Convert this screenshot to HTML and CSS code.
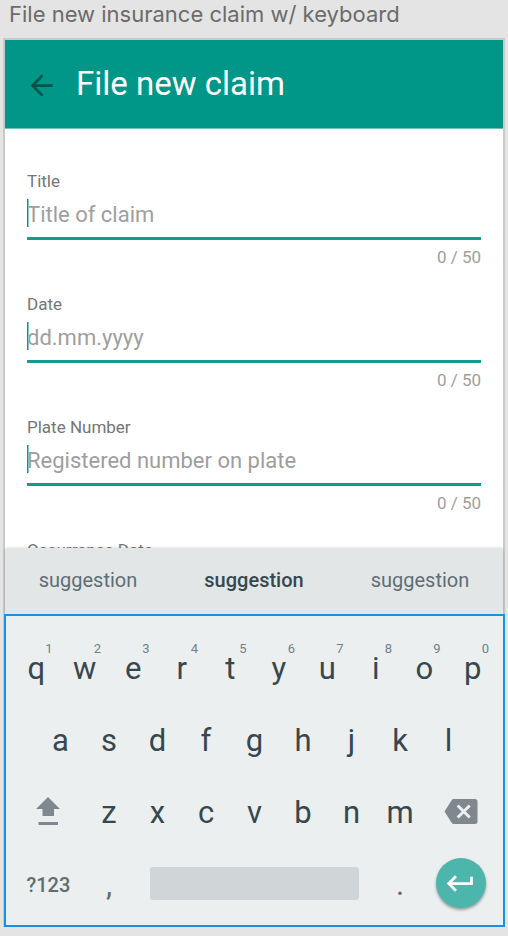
FILE: index.html
```html
<!DOCTYPE html>
<html lang="en">
<head>
<meta charset="utf-8">
<meta name="viewport" content="width=device-width, initial-scale=1">
<title>File new claim</title>
<link rel="stylesheet" href="styles.css">
</head>
<body>
<h2 class="caption">File new insurance claim w/ keyboard</h2>
<main class="phone">
  <header class="app-bar">
    <button class="back" type="button" aria-label="Back">
      <svg viewBox="0 0 24 24" width="33" height="33"><path d="M20 11H7.83l5.59-5.59L12 4l-8 8 8 8 1.41-1.41L7.83 13H20v-2z"/></svg>
    </button>
    <h1 class="title">File new claim</h1>
  </header>

  <form class="form">
    <div class="field">
      <label class="label" for="title">Title</label>
      <div class="control"><input class="input" id="title" type="text" placeholder="Title of claim"></div>
      <span class="counter">0 / 50</span>
    </div>
    <div class="field">
      <label class="label" for="date">Date</label>
      <div class="control"><input class="input" id="date" type="text" placeholder="dd.mm.yyyy"></div>
      <span class="counter">0 / 50</span>
    </div>
    <div class="field">
      <label class="label" for="plate">Plate Number</label>
      <div class="control"><input class="input" id="plate" type="text" placeholder="Registered number on plate"></div>
      <span class="counter">0 / 50</span>
    </div>
    <div class="field">
      <label class="label" for="occurrence">Occurrence Date</label>
      <div class="control"><input class="input" id="occurrence" type="text"></div>
    </div>
  </form>

  <div class="suggestions">
    <button class="suggestion" type="button">suggestion</button>
    <button class="suggestion best" type="button">suggestion</button>
    <button class="suggestion" type="button">suggestion</button>
  </div>

  <section class="keyboard" aria-label="Keyboard">
    <div class="row">
      <button class="key" type="button">q<span class="alt">1</span></button>
      <button class="key" type="button">w<span class="alt">2</span></button>
      <button class="key" type="button">e<span class="alt">3</span></button>
      <button class="key" type="button">r<span class="alt">4</span></button>
      <button class="key" type="button">t<span class="alt">5</span></button>
      <button class="key" type="button">y<span class="alt">6</span></button>
      <button class="key" type="button">u<span class="alt">7</span></button>
      <button class="key" type="button">i<span class="alt">8</span></button>
      <button class="key" type="button">o<span class="alt">9</span></button>
      <button class="key" type="button">p<span class="alt">0</span></button>
    </div>
    <div class="row">
      <button class="key indent" type="button">a</button>
      <button class="key" type="button">s</button>
      <button class="key" type="button">d</button>
      <button class="key" type="button">f</button>
      <button class="key" type="button">g</button>
      <button class="key" type="button">h</button>
      <button class="key" type="button">j</button>
      <button class="key" type="button">k</button>
      <button class="key" type="button">l</button>
    </div>
    <div class="row">
      <button class="key wide graphic" type="button" aria-label="Shift">
        <svg class="glyph" viewBox="0 0 24 28" width="24" height="28"><path d="M12 0L24 12H18V19H6.500V12H0zM2.500 25H22V28H2.500z"/></svg>
      </button>
      <button class="key" type="button">z</button>
      <button class="key" type="button">x</button>
      <button class="key" type="button">c</button>
      <button class="key" type="button">v</button>
      <button class="key" type="button">b</button>
      <button class="key" type="button">n</button>
      <button class="key" type="button">m</button>
      <button class="key wide graphic" type="button" aria-label="Delete">
        <svg class="glyph" viewBox="0 0 34 25" width="34" height="25"><path d="M9.500 0H31a2.500 2.500 0 0 1 2.500 2.500v20A2.500 2.500 0 0 1 31 25H9.500Q8.500 25 7.800 24L.5 12.500 7.800 1Q8.500 0 9.500 0z"/><path class="cross" d="M13.700 6.500l12 12M25.700 6.500l-12 12"/></svg>
      </button>
    </div>
    <div class="row">
      <button class="key wide symbols" type="button">?123</button>
      <button class="key soft" type="button">,</button>
      <button class="key space graphic" type="button" aria-label="Space"><span class="bar"></span></button>
      <button class="key soft" type="button">.</button>
      <button class="key wide graphic" type="button" aria-label="Enter">
        <span class="enter"><svg viewBox="0 0 24 24" width="33" height="33"><path d="M19 7v4H5.830l3.580-3.590L8 6l-6 6 6 6 1.410-1.410L5.830 13H21V7z"/></svg></span>
      </button>
    </div>
  </section>
</main>
</body>
</html>
```
FILE: styles.css
```css
* {
  box-sizing: border-box;
}

body {
  display: flex;
  flex-direction: column;
  height: 100vh;
  margin: 0;
  padding: 0 3px 9px;
  background: #e4e4e4;
  font-family: Roboto, "Liberation Sans", sans-serif;
}

button {
  padding: 0;
  border: 0;
  background: none;
  color: inherit;
  font: inherit;
}

svg {
  display: block;
}

.caption {
  flex: none;
  margin: 0;
  padding: 0 6px 10px;
  color: #6b6b6b;
  font-family: Inter, sans-serif;
  font-size: 22px;
  font-weight: 400;
  line-height: 28px;
}

.phone {
  display: flex;
  flex: 1;
  flex-direction: column;
  min-height: 0;
  border: 2px solid #c9c9c9;
  border-bottom: 0;
  background: #fff;
}

.app-bar {
  display: flex;
  flex: none;
  align-items: center;
  gap: 18px;
  height: 89px;
  padding: 0 20px;
  border-bottom: 1px solid #6fc0b8;
  background: #009788;
}

.back {
  padding-top: 3px;
  fill: #03554c;
}

.title {
  margin: 0;
  color: #fff;
  font-size: 33px;
  font-weight: 400;
  line-height: 40px;
}

.form {
  display: flex;
  flex: 1;
  flex-direction: column;
  gap: 27px;
  min-height: 0;
  padding: 42px 22px 0;
  overflow: hidden;
}

.field {
  display: flex;
  flex: none;
  flex-direction: column;
}

.label {
  margin-bottom: 8px;
  color: #757575;
  font-size: 17px;
  line-height: 20px;
}

.control {
  position: relative;
  padding-bottom: 9px;
  border-bottom: 3px solid #109c8f;
}

.control::before {
  content: "";
  position: absolute;
  top: 0;
  left: 0;
  width: 1px;
  height: 28px;
  border-right: 1px solid #80cbc4;
  background: #009688;
}

.input {
  display: block;
  width: 100%;
  height: 29px;
  padding: 1px 0 0;
  border: 0;
  outline: 0;
  background: none;
  color: #212121;
  font: 22px/28px Roboto, "Liberation Sans", sans-serif;
}

.input::placeholder {
  color: #9e9e9e;
  opacity: 1;
}

.counter {
  align-self: flex-end;
  margin-top: 7px;
  color: #9e9e9e;
  font-size: 17px;
  line-height: 20px;
}

.suggestions {
  display: grid;
  flex: none;
  grid-template-columns: repeat(3, 1fr);
  height: 66px;
  border-radius: 3px 3px 0 0;
  background: #e2e6e7;
  box-shadow: 0 0 3px rgba(0, 0, 0, 0.2);
}

.suggestion {
  padding-bottom: 2px;
  color: #5f6d74;
  font-size: 20px;
}

.best {
  color: #37474f;
  font-weight: 500;
}

.keyboard {
  position: relative;
  flex: none;
  margin: 0 -2px 0 -1px;
  padding: 17px 6px 4px;
  border: 2px solid #1a8fe3;
  background: #ebeff0;
}

.row {
  display: grid;
  grid-template-columns: repeat(20, 1fr);
  height: 72px;
}

.key {
  display: flex;
  position: relative;
  grid-column-end: span 2;
  align-items: center;
  justify-content: center;
  color: #37474f;
  font-size: 31px;
  line-height: 36px;
}

.indent {
  grid-column-start: 2;
}

.wide {
  grid-column-end: span 3;
}

.graphic {
  padding-bottom: 4px;
}

.space {
  grid-column-end: span 10;
  padding-right: 17px;
  padding-left: 17px;
}

.alt {
  position: absolute;
  top: 8px;
  right: 8px;
  color: #70808a;
  font-size: 13px;
  line-height: 16px;
}

.symbols {
  color: #5f6d74;
  font-size: 20px;
  font-weight: 500;
}

.soft {
  color: #5f6d74;
}

.glyph {
  fill: #80888f;
}

.cross {
  stroke: #ebeff0;
  stroke-width: 3;
}

.bar {
  flex: 1;
  height: 33px;
  border-radius: 3px;
  background: #d0d5d8;
}

.enter {
  display: flex;
  align-items: center;
  justify-content: center;
  width: 50px;
  height: 50px;
  border-radius: 50%;
  background: #4db6ac;
  box-shadow: 0 2px 3px rgba(0, 0, 0, 0.35);
  fill: #fff;
}
```
